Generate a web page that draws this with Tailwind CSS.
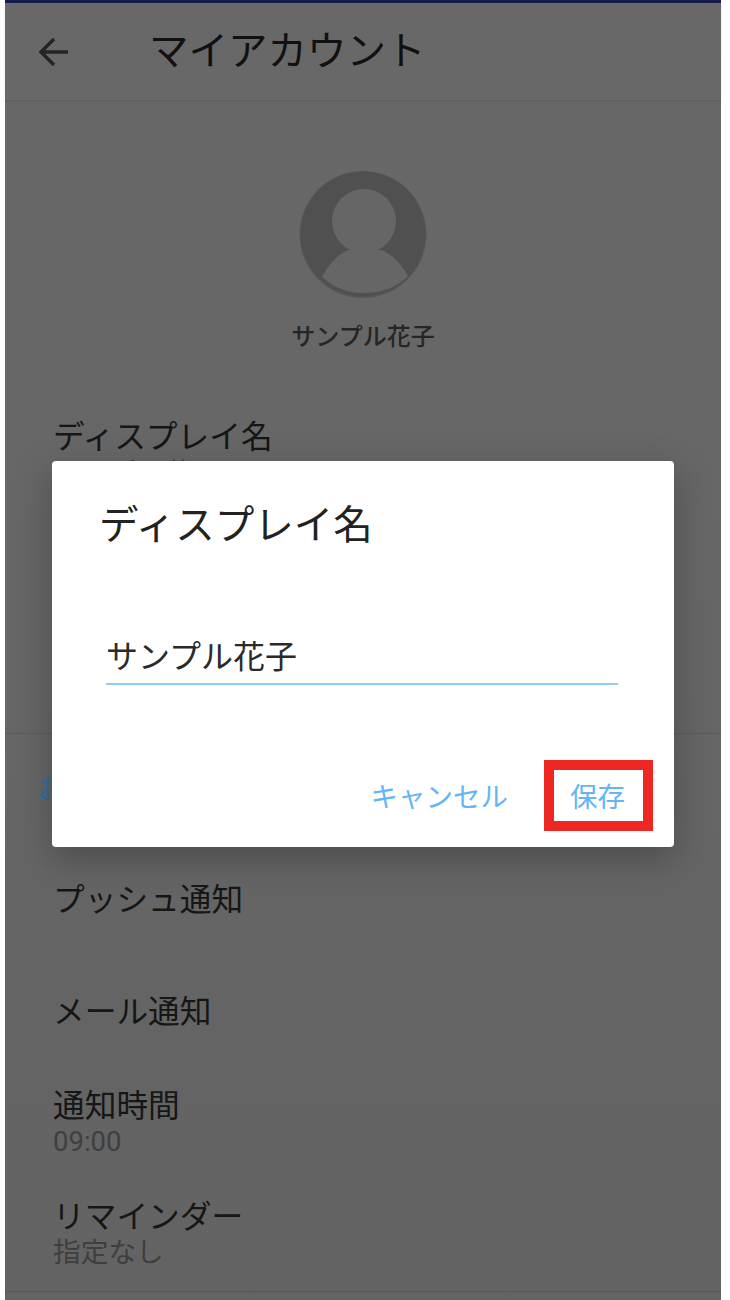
<!doctype html>
<html lang="ja">
<head>
<meta charset="utf-8">
<script src="https://cdn.jsdelivr.net/npm/@tailwindcss/browser@4"></script>
</head>
<body class="bg-white">
<div class="relative w-[730px] h-[1300px] overflow-hidden bg-white font-['Noto_Sans_CJK_JP','Noto_Sans',sans-serif]">
  <div class="ml-[5px] w-[716px] h-[1300px] bg-linear-to-b from-[#686868] via-[#666666] to-[#636363] flex flex-col">
    <div class="h-[3px] bg-[#141c4a] shrink-0"></div>
    <header class="h-[98px] shrink-0 flex items-center border-b border-[#5f5f5f] shadow-[0_1px_3px_rgba(0,0,0,0.08)]">
      <svg class="ml-[32px] w-[34px] h-[34px] text-[#242424]" viewBox="0 0 34 34" fill="none" stroke="currentColor" stroke-width="3.4"><path d="M31 17H4M17 4 4 17l13 13"/></svg>
      <h1 class="ml-[78px] mb-[8px] text-[39.5px] leading-[48px] text-[#111111] font-normal">マイアカウント</h1>
    </header>
    <section class="flex flex-col items-center pt-[70px]">
      <svg class="w-[128px] h-[127px]" viewBox="0 0 128 127">
        <circle cx="64" cy="63.5" r="63.5" fill="#585858"/>
        <circle cx="64" cy="63" r="62.5" fill="#505050"/>
        <circle cx="65" cy="50" r="32" fill="#666666"/>
        <path d="M23 106C30 93 38 84 49 79h34c11 5 19 14 26 26-11 11-26 17-44 17s-31-6-42-16Z" fill="#666666"/>
      </svg>
      <p class="mt-[20px] text-[24px] leading-[34px] text-[#262626] font-medium">サンプル花子</p>
    </section>
    <section class="pl-[48px] pt-[62px]">
      <p class="text-[31.7px] leading-[40px] text-[#161616]">ディスプレイ名</p>
      <p class="mt-[3px] text-[28px] leading-[30px] text-[#3f3f3f]">サンプル花子</p>
    </section>
    <div class="mt-[246px] border-t border-[#5c5c5c]"></div>
    <section class="pl-[32px] pt-[35px]">
      <p class="text-[28px] leading-[36px] text-[#2f6f9e]">お知らせ設定</p>
    </section>
    <section class="pl-[48px] text-[31.7px] text-[#161616]">
      <p class="mt-[67px] leading-[50px]">プッシュ通知</p>
      <p class="mt-[62px] leading-[50px]">メール通知</p>
      <div class="mt-[49px]">
        <p class="leading-[40px]">通知時間</p>
        <p class="mt-[3px] text-[27.5px] leading-[32px] text-[#3f3f3f] font-['Roboto','Noto_Sans_CJK_JP',sans-serif]">09:00</p>
      </div>
      <div class="mt-[36px]">
        <p class="leading-[40px]">リマインダー</p>
        <p class="text-[27.7px] leading-[32px] text-[#3f3f3f]">指定なし</p>
      </div>
    </section>
    <div class="mt-[25px] border-t border-[#565656]"></div>
  </div>

  <div class="absolute left-[52px] top-[461px] w-[622px] h-[386px] bg-white rounded-[4px] shadow-[0_12px_36px_rgba(0,0,0,0.25)] flex flex-col">
    <h2 class="ml-[47px] mt-[36px] text-[39.5px] leading-[50px] text-[#222222] font-normal">ディスプレイ名</h2>
    <div class="ml-[54px] mt-[83px] w-[512px] border-b-2 border-[#90caf9] text-[32px] leading-[48px] pb-[5px] text-[#2a2a2a]"><span>サンプル花子</span></div>
    <div class="mt-auto mb-[16px] flex justify-end items-center text-[27.5px] text-[#64b5f6] leading-[71px]">
      <button class="mr-[36px] h-[71px]">キャンセル</button>
      <button class="mr-[21px] w-[109px] h-[71px] border-[10px] border-[#ee2722] leading-[51px] pr-[2px]">保存</button>
    </div>
  </div>
</div>
</body>
</html>
